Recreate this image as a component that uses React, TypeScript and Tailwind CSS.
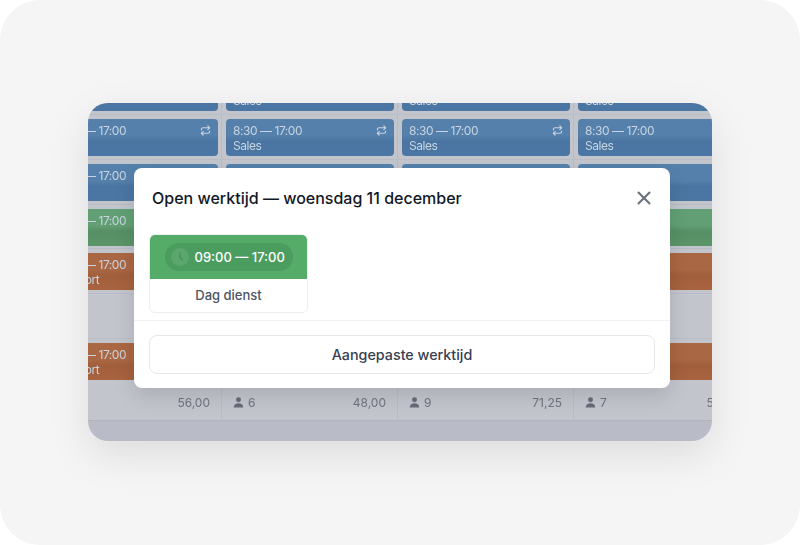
import React from 'react';
import { Repeat, X } from 'lucide-react';

const tones = {
  blue: 'bg-[linear-gradient(#5480ab_0%,#5480ab_45%,#4a75a2_60%,#4b76a3_100%)]',
  green: 'bg-[linear-gradient(#629f74_0%,#629f74_45%,#578f65_60%,#5b9569_100%)]',
  orange: 'bg-[linear-gradient(#aa6743_0%,#aa6743_45%,#a25f3c_60%,#a8633f_100%)]',
};

type Tone = keyof typeof tones;

const rows: { tone: Tone | null; label: string; icon?: boolean; height: string }[] = [
  { tone: 'blue', label: 'Sales', height: 'h-[45px]' },
  { tone: 'blue', label: 'Sales', icon: true, height: 'h-[45px]' },
  { tone: 'blue', label: 'Sales', height: 'h-[45px]' },
  { tone: 'green', label: 'Sales', height: 'h-[44px]' },
  { tone: 'orange', label: 'Support', height: 'h-[45px]' },
  { tone: null, label: '', height: 'h-[45px]' },
  { tone: 'orange', label: 'Support', height: 'h-[41px]' },
];

const totals = [
  { people: 8, hours: '56,00' },
  { people: 6, hours: '48,00' },
  { people: 9, hours: '71,25' },
  { people: 7, hours: '56,00' },
];

const PersonIcon = () => (
  <svg viewBox="0 0 12 12" className="w-[11px] h-[11px] fill-[#666b78]">
    <circle cx="6" cy="3" r="2.7" />
    <path d="M0.8 11.5c0-3 2-4.8 5.2-4.8s5.200 1.800 5.200 4.800z" />
  </svg>
);

const ClockIcon = () => (
  <svg viewBox="0 0 20 20" className="w-[20px] h-[20px]">
    <circle cx="10" cy="10" r="9" fill="#5aa66c" />
    <path d="M10 5.500V10.500L13 13" fill="none" stroke="#459158" strokeWidth="1.300" />
  </svg>
);

const ShiftCell: React.FC<{ tone: Tone | null; label: string; icon?: boolean; last?: boolean }> = ({ tone, label, icon, last }) => (
  <div className={`w-[176px] shrink-0 h-full py-[4px] pl-[4px] ${last ? 'pr-[4px]' : 'pr-[3px] border-r border-[#b9bcc5]'}`}>
    {tone && (
      <div className={`h-[37px] rounded-[4px] px-[7px] pt-[4px] flex justify-between text-[12px] leading-[15px] tracking-[-0.45px] text-[#c9d4e0] ${tones[tone]}`}>
        <div>
          <div className="whitespace-nowrap">8:30 — 17:00</div>
          <div>{label}</div>
        </div>
        {icon && <Repeat size={11} strokeWidth={2.5} className="mt-[2px] text-[#c9d4e0]" />}
      </div>
    )}
  </div>
);

export default function App() {
  return (
    <div className="w-[800px] h-[545px] bg-white font-['Inter',sans-serif]">
      <div className="w-full h-full rounded-[40px] bg-[#f5f5f5] pl-[88px] pt-[103px]">
        <div className="relative w-[624px] h-[338px] rounded-[20px] shadow-[0_14px_40px_rgba(0,0,0,0.1)]">
          <div className="w-full h-full overflow-hidden rounded-[20px] bg-[#b9bcc6]">
            <div className="-mt-[33px] -ml-[42px] w-[704px] blur-[0.3px]">
              {rows.map((row, i) => (
                <div key={i} className={`flex bg-[#c2c5cc] border-b border-[#babdc5] ${row.height}`}>
                  {[0, 1, 2, 3].map((col) => (
                    <ShiftCell key={col} tone={row.tone} label={row.label} icon={row.icon} last={col === 3} />
                  ))}
                </div>
              ))}
              <div className="flex h-[41px] bg-[#c2c5cc] border-b border-[#b2b5be] text-[12px] text-[#6f7480]">
                {totals.map((t, i) => (
                  <div key={i} className={`w-[176px] shrink-0 flex items-center justify-between pt-[5px] pl-[11px] pr-[11px] ${i < 3 ? 'border-r border-[#b9bcc5]' : ''}`}>
                    <span className="flex items-center gap-[4px]">
                      <PersonIcon />
                      {t.people}
                    </span>
                    <span>{t.hours}</span>
                  </div>
                ))}
              </div>
            </div>
          </div>

          {/* Modal */}
          <div className="absolute left-[46px] top-[65px] w-[536px] h-[220px] rounded-[8px] bg-white shadow-[0_8px_20px_rgba(0,0,0,0.12)]">
            <div className="flex items-center justify-between h-[60px] pl-[18px] pr-[15px]">
              <h2 className="text-[16px] font-medium text-[#111827]">Open werktijd — woensdag 11 december</h2>
              <X size={22} strokeWidth={2.3} className="text-[#6b7280]" />
            </div>
            <div className="h-[93px] pl-[15px] pt-[6px] border-b border-[#f0f1f3]">
              <div className="w-[159px] h-[79px] rounded-[6px] border border-[#eceef1] overflow-hidden">
                <div className="h-[44px] bg-[#55ac69] flex items-center justify-center">
                  <div className="w-[128px] h-[28px] rounded-full bg-[#4b9c5f] flex items-center gap-[5px] pl-[5px]">
                    <ClockIcon />
                    <span className="pt-[1px] text-[13px] font-medium text-white whitespace-nowrap">09:00 — 17:00</span>
                  </div>
                </div>
                <div className="h-[33px] flex items-center justify-center text-[13px] font-medium text-[#4b5563]">Dag dienst</div>
              </div>
            </div>
            <div className="px-[15px] pt-[14px]">
              <button className="w-full h-[39px] rounded-[8px] border border-[#e5e7eb] text-[14.3px] font-medium text-[#374151]">
                Aangepaste werktijd
              </button>
            </div>
          </div>
        </div>
      </div>
    </div>
  );
}
